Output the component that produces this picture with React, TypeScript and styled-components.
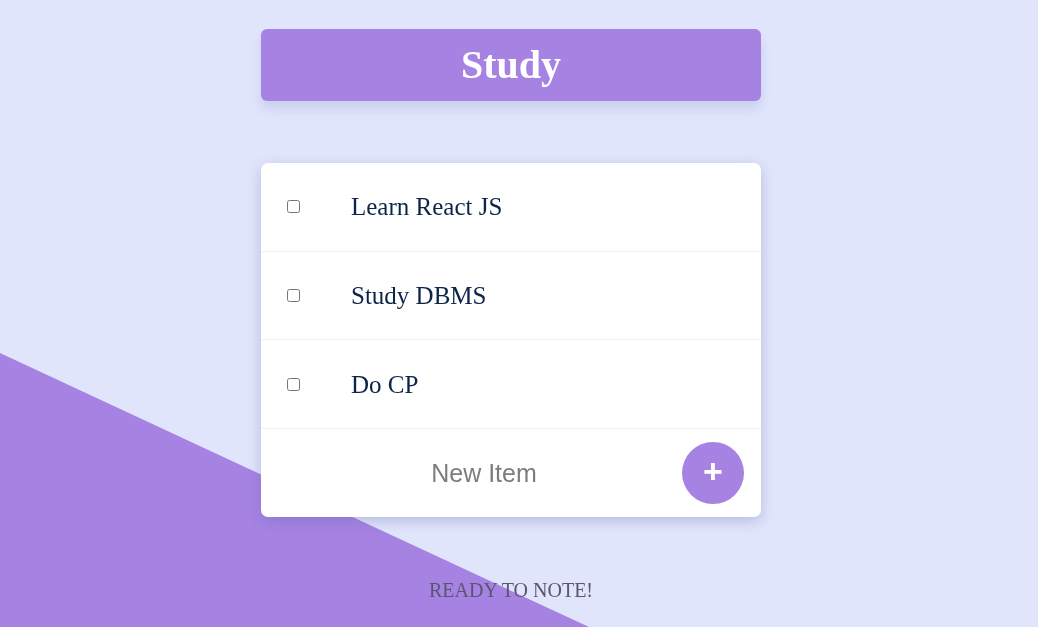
import React from "react";
import styled, { createGlobalStyle } from "styled-components";

const Global = createGlobalStyle`
  html, body { margin: 0; padding: 0; }
  body {
    background: #e1e5fc;
    font-family: "Liberation Serif", "Times New Roman", serif;
    min-height: 627px;
    overflow: hidden;
  }
  body::before {
    content: "";
    position: fixed;
    inset: 0;
    background: #a683e3;
    clip-path: polygon(0 353px, 589px 627px, 0 627px);
    z-index: -1;
  }
`;

const Page = styled.div`
  width: 1022px;
  display: flex;
  flex-direction: column;
  align-items: center;
  padding-top: 29px;
`;

const Header = styled.div`
  width: 500px;
  height: 72px;
  background: #a683e3;
  border-radius: 6px;
  box-shadow: 0 8px 12px rgba(100, 110, 170, 0.18);
  display: flex;
  align-items: center;
  justify-content: center;
`;

const Title = styled.h1`
  margin: 0;
  color: #fff;
  font-family: "Liberation Serif", "Times New Roman", serif;
  font-weight: 700;
  font-size: 40px;
  line-height: 1;
`;

const Card = styled.div`
  margin-top: 62px;
  width: 500px;
  background: #fff;
  border-radius: 7px;
  box-shadow: 0 4px 14px rgba(90, 100, 160, 0.32);
  display: flex;
  flex-direction: column;
`;

const Row = styled.div`
  height: 88.67px;
  display: flex;
  align-items: center;
  border-bottom: 1px solid #efeff3;
  box-sizing: border-box;
`;

const Check = styled.input`
  margin: 0 0 0 26px;
  width: 13px;
  height: 13px;
`;

const ItemText = styled.p`
  margin: 1px 0 0 51px;
  font-size: 25px;
  color: #0c2448;
  font-family: "Liberation Serif", "Times New Roman", serif;
`;

const Form = styled.div`
  height: 88px;
  display: flex;
  align-items: center;
  padding-right: 17px;
`;

const Input = styled.input`
  flex: 1;
  border: none;
  outline: none;
  text-align: center;
  font-family: "Liberation Sans", Arial, sans-serif;
  font-size: 25px;
  color: #333;
  background: transparent;
  padding: 2px 0 0 25px;
  &::placeholder { color: #7d7d7d; }
`;

const AddButton = styled.button`
  width: 62px;
  height: 62px;
  border-radius: 50%;
  border: none;
  background: #a683e3;
  color: #fff;
  font-family: "Liberation Sans", Arial, sans-serif;
  font-size: 34px;
  font-weight: 700;
  line-height: 1;
  display: flex;
  align-items: center;
  justify-content: center;
  padding: 0 0 4px 0;
  margin-top: 1px;
`;

const Footer = styled.p`
  margin: 62px 0 0 0;
  font-size: 20px;
  color: #5a5670;
  font-family: "Liberation Serif", "Times New Roman", serif;
`;

const items = ["Learn React JS", "Study DBMS", "Do CP"];

export default function App() {
  return (
    <>
      <Global />
      <Page>
        <Header>
          <Title>Study</Title>
        </Header>
        <Card>
          {items.map((t) => (
            <Row key={t}>
              <Check type="checkbox" />
              <ItemText>{t}</ItemText>
            </Row>
          ))}
          <Form>
            <Input placeholder="New Item" />
            <AddButton>+</AddButton>
          </Form>
        </Card>
        <Footer>READY TO NOTE!</Footer>
      </Page>
    </>
  );
}
